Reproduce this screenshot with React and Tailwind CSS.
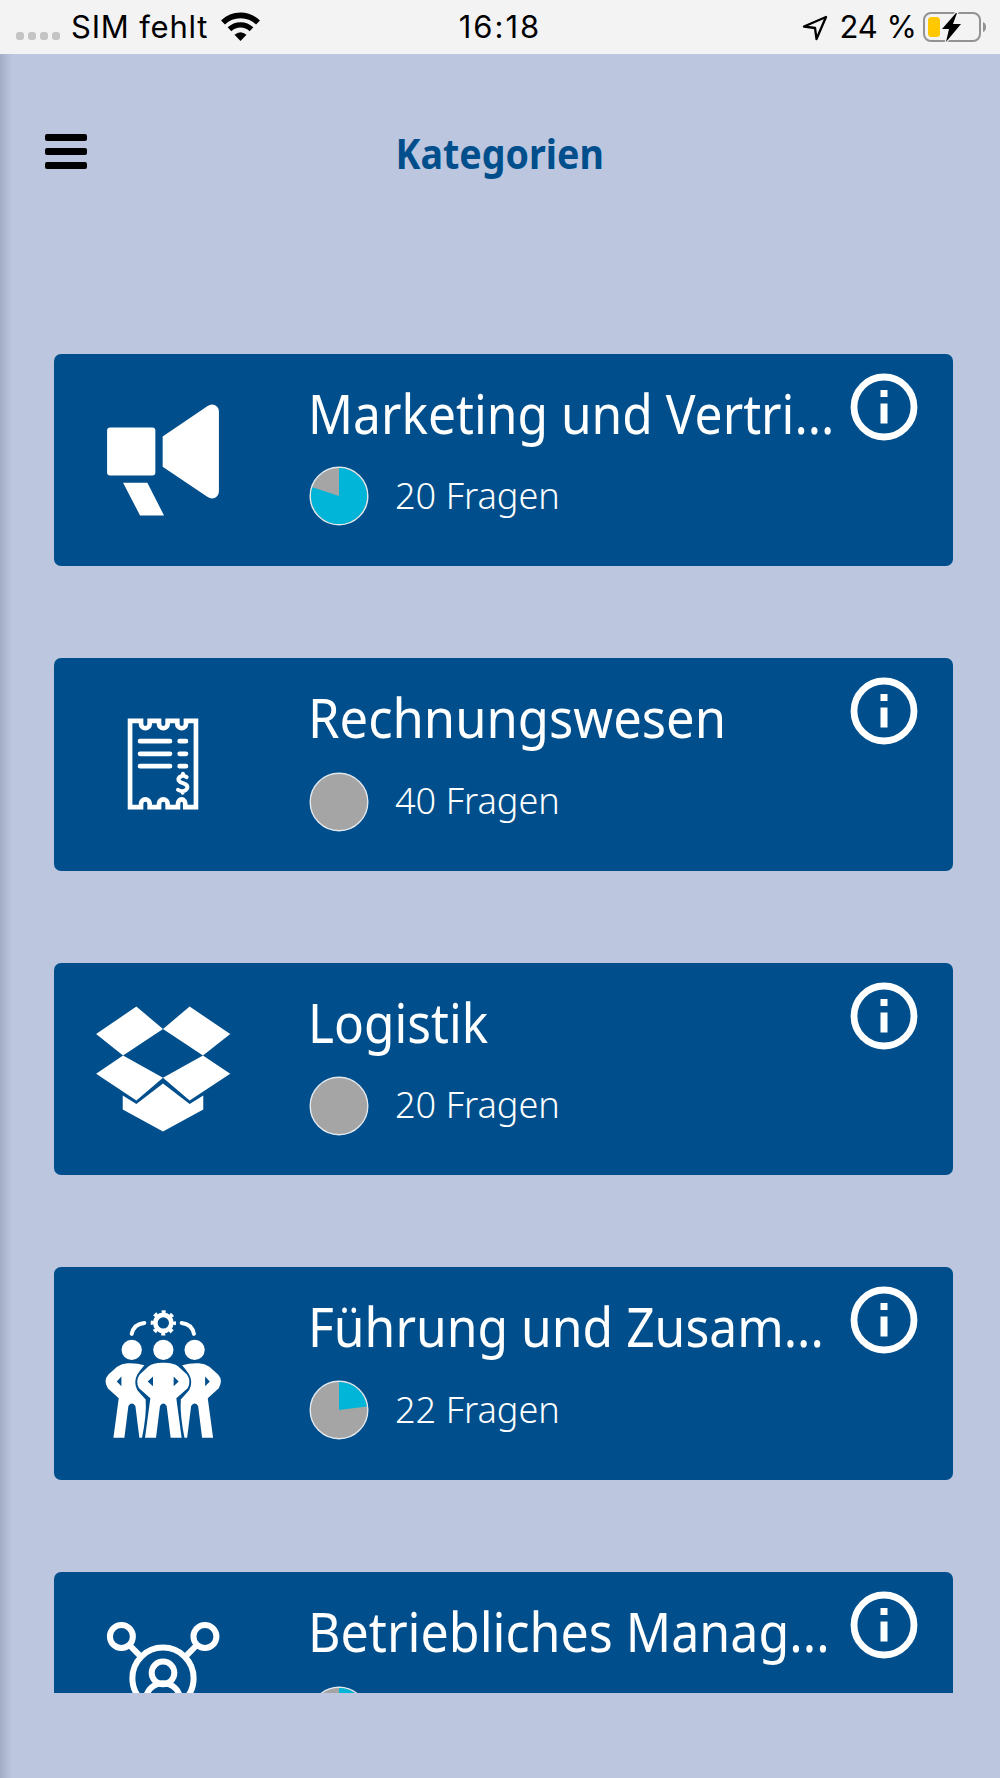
import React from 'react';

const MegaphoneIcon = () => (
  <svg viewBox="128 40 480 640" className="w-40 h-[213px] shrink-0" fill="white">
    <rect x="200" y="261" width="145" height="144" rx="9" />
    <path d="M367 288 L501 197 Q514 188 526 195 Q536 201 536 214 V452 Q536 465 526 471 Q514 478 501 469 L367 379 Z" />
    <path d="M248 427 H321 L371 525 H299 Z" />
  </svg>
);

const ReceiptIcon = () => (
  <svg viewBox="128 38 480 640" className="w-40 h-[213px] shrink-0" fill="none" stroke="white" strokeLinecap="round">
    <path
      strokeWidth="14"
      strokeLinecap="butt"
      d="M269 227 H302 V236 A13 13 0 0 0 328 236 V227 H356 V236 A13 13 0 0 0 382 236 V227 H411 V236 A13 13 0 0 0 437 236 V227 H467 V486 H435 V476 A11 13 0 0 0 413 476 V486 H382 V476 A13 13 0 0 0 356 476 V486 H328 V476 A13 13 0 0 0 302 476 V486 H269 Z"
    />
    <path strokeWidth="14" d="M299 288 H389 M418 288 H437 M299 326 H389 M418 326 H437 M299 363 H389 M418 363 H437" />
    <path strokeWidth="12" d="M439 396 Q431 390 423 393 Q412 398 415 406 Q418 411 428 414 Q443 419 441 428 Q438 438 426 438 Q418 438 413 434 M428 386 V392 M427 438 V443" />
  </svg>
);

const BoxIcon = () => (
  <svg viewBox="128 38 480 640" className="w-40 h-[213px] shrink-0" fill="white">
    <path d="M288 169 L368 236 L248 316 L167 251 Z" />
    <path d="M448 169 L570 251 L488 316 L368 236 Z" />
    <path d="M248 316 L368 383 L288 451 L167 371 Z" />
    <path d="M488 316 L570 371 L448 451 L368 383 Z" />
    <path d="M368 400 L448 462 L489 436 V478 L368 544 L247 478 V436 L288 462 Z" />
  </svg>
);

const TeamIcon = () => (
  <svg viewBox="128 36 480 640" className="w-40 h-[213px] shrink-0" fill="white">
    <g fill="none" stroke="white">
      <path strokeWidth="12" strokeLinecap="round" d="M274 237 Q280 207 312 204 M424 204 Q455 207 461 237" />
      <circle cx="369" cy="204" r="24" strokeWidth="14" />
      <circle cx="369" cy="204" r="33" strokeWidth="10" strokeDasharray="12 13.918" strokeDashoffset="6" />
    </g>
    <circle cx="274" cy="285" r="30.5" />
    <circle cx="369" cy="285" r="30.5" />
    <circle cx="463" cy="285" r="30.5" />
    {/* outer people, the right one mirrors the left */}
    <path
      fillRule="evenodd"
      d="M312 331 Q290 324 262 325 Q244 326 230 336 L204 359 Q188 377 202 400 L235 430 L219 549 H252 L264 454 Q274 439 285 454 L297 549 H305 Q319 480 316 434 L291 406 Q278 382 291 359 Q298 347 312 331 Z M243 365 V394 L229 380 Z"
    />
    <path
      fillRule="evenodd"
      transform="matrix(-1 0 0 1 737.5 0)"
      d="M312 331 Q290 324 262 325 Q244 326 230 336 L204 359 Q188 377 202 400 L235 430 L219 549 H252 L264 454 Q274 439 285 454 L297 549 H305 Q319 480 316 434 L291 406 Q278 382 291 359 Q298 347 312 331 Z M243 365 V394 L229 380 Z"
    />
    <path
      fillRule="evenodd"
      d="M369 324 Q340 323 324 335 L298 359 Q284 379 296 400 L330 430 L314 549 H347 L359 454 Q369 439 379 454 L391 549 H424 L408 430 L442 400 Q454 379 440 359 L414 335 Q398 323 369 324 Z M338 365 V394 L322 380 Z M400 365 V394 L415 380 Z"
    />
  </svg>
);

const NetworkIcon = () => (
  <svg viewBox="128 34 480 640" className="w-40 h-[213px] shrink-0" fill="none" stroke="white" strokeWidth="18">
    <circle cx="243" cy="228" r="34.5" />
    <circle cx="494" cy="228" r="34.5" />
    <circle cx="368" cy="353" r="92" />
    <circle cx="368" cy="337" r="34" />
    <path d="M267 254 L303 290 M469 254 L434 290" />
    <path d="M316 420 A52 52 0 0 1 420 420" />
  </svg>
);

const categories = [
  { name: 'Marketing und Vertri...', questions: 20, progress: 0.8, icon: MegaphoneIcon, fit: 'scale-x-[0.92]', pie: 'mt-[-1px]' },
  { name: 'Rechnungswesen', questions: 40, progress: 0, icon: ReceiptIcon, fit: 'scale-x-[0.939]', pie: 'mt-[2px]' },
  { name: 'Logistik', questions: 20, progress: 0, icon: BoxIcon, fit: 'scale-x-[0.918]', pie: 'mt-[1px]' },
  { name: 'Führung und Zusam...', questions: 22, progress: 0.23, icon: TeamIcon, fit: 'scale-x-[0.922]', pie: 'mt-[-1px]' },
  { name: 'Betriebliches Manag...', progress: 0.2, icon: NetworkIcon, fit: 'scale-x-[0.928]', pie: 'mt-[3px]' },
];

const ProgressPie = ({ value }) => {
  const angle = value * 2 * Math.PI;
  const x = 30 + 28 * Math.sin(angle);
  const y = 30 - 28 * Math.cos(angle);

  return (
    <svg viewBox="0 0 60 60" className="w-[60px] h-[60px]">
      <circle cx="30" cy="30" r="28.8" fill="#a5a5a5" stroke="#e4e9ee" strokeWidth="1.4" />
      {value > 0 && (
        <path d={`M30 30 V2 A28 28 0 ${value > 0.5 ? 1 : 0} 1 ${x} ${y} Z`} fill="#00b5d8" />
      )}
    </svg>
  );
};

const InfoIcon = () => (
  <svg viewBox="0 0 68 68" className="w-[68px] h-[68px] shrink-0">
    <circle cx="34" cy="34" r="30" fill="none" stroke="white" strokeWidth="6.8" />
    <path d="M30.5 17 h7 v7 h-7 Z M30.5 30.5 h7 v20 h-7 Z" fill="white" />
  </svg>
);

const CategoryCard = ({ category }) => {
  const Icon = category.icon;

  return (
    <div className="flex h-[212.5px] shrink-0 rounded-[7px] bg-[#004f8c] text-white">
      <div className="w-[255px] pl-[29px] shrink-0">
        <Icon />
      </div>
      <div className="flex-1 min-w-0 pt-[22px]">
        <h2 className={`-ml-px h-[77px] leading-[75px] text-[54px] whitespace-nowrap origin-left ${category.fit}`}>
          {category.name}
        </h2>
        <div className="flex items-center h-[88px]">
          <div className={category.pie}>
            <ProgressPie value={category.progress} />
          </div>
          {category.questions && (
            <span className="ml-[26px] mb-[2px] text-[37.5px] font-light whitespace-nowrap origin-left scale-x-[0.963]">
              {category.questions} Fragen
            </span>
          )}
        </div>
      </div>
      <div className="w-[103px] pt-[19px] shrink-0">
        <InfoIcon />
      </div>
    </div>
  );
};

const StatusBar = () => (
  <div className="grid grid-cols-3 items-center h-[53.5px] shrink-0 bg-[#f3f3f3] text-black text-[31px] font-['Inter',sans-serif]">
    <div className="flex items-center pl-4">
      <div className="flex gap-1 mt-[18px]">
        <span className="size-2 rounded-[3px] bg-[#c4c4c4]" />
        <span className="size-2 rounded-[3px] bg-[#c4c4c4]" />
        <span className="size-2 rounded-[3px] bg-[#c4c4c4]" />
        <span className="size-2 rounded-[3px] bg-[#c4c4c4]" />
      </div>
      <span className="ml-[11px] whitespace-nowrap tracking-[0.8px]">SIM fehlt</span>
      <svg viewBox="0 0 39 30" className="w-[39px] h-[30px] ml-[13px] shrink-0">
        <path d="M2 10.5 A25 25 0 0 1 37 10.5" fill="none" stroke="black" strokeWidth="5.6" />
        <path d="M8.5 17.3 A16 16 0 0 1 30.5 17.3" fill="none" stroke="black" strokeWidth="5.4" />
        <path d="M13.5 22.8 Q19.5 17.5 25.5 22.8 L19.5 29 Z" fill="black" />
      </svg>
    </div>
    <span className="text-center tracking-[2px]">16:18</span>
    <div className="flex items-center justify-end pr-[13px]">
      <svg viewBox="0 0 26 26" className="w-[26px] h-[26px] mt-[3px] mr-[11px]" fill="none" stroke="black" strokeWidth="2.3" strokeLinejoin="round">
        <path d="M24 2 L2 11.5 L13 13 L14.5 24 Z" />
      </svg>
      <span className="whitespace-nowrap">24 %</span>
      <svg viewBox="0 0 65 32" className="w-[65px] h-8 ml-[5px] shrink-0">
        <rect x="2" y="2" width="56" height="28" rx="7" fill="none" stroke="#929292" strokeWidth="2" />
        <path d="M61 11 Q64 12 64 16 Q64 20 61 21 Z" fill="#929292" />
        <rect x="6" y="6" width="12" height="20" rx="3.5" fill="#ffc800" />
        <path d="M34 2 L20 18 H27 L24 31 L39 13 H31 L35 2 Z" fill="black" stroke="#f3f3f3" strokeWidth="2.5" paintOrder="stroke" />
      </svg>
    </div>
  </div>
);

const App = () => {
  return (
    <div className="flex flex-col w-[1000px] h-[1778px] overflow-hidden bg-[#bcc6df] font-['Noto_Sans',sans-serif]">
      <StatusBar />
      <div className="flex-1 min-h-0 bg-linear-to-r from-[#a3adc5] to-[#bcc6df] to-[12px]">
        <header className="grid grid-cols-3 items-center h-[200px] px-[45px]">
          <button className="flex flex-col gap-[7px] w-[42px] mb-[5px]" aria-label="Menü">
            <span className="h-[7px] w-full rounded-[2px] bg-black" />
            <span className="h-[7px] w-full rounded-[2px] bg-black" />
            <span className="h-[7px] w-full rounded-[2px] bg-black" />
          </button>
          <h1 className="mb-[2px] text-center text-[42px] font-bold text-[#004f8c] scale-x-[0.895]">Kategorien</h1>
        </header>
        <main className="flex flex-col gap-[92px] h-[1439px] pt-[100px] pl-[53.5px] pr-[47px] overflow-hidden">
          {categories.map((category) => (
            <CategoryCard key={category.name} category={category} />
          ))}
        </main>
      </div>
    </div>
  );
};

export default App;
